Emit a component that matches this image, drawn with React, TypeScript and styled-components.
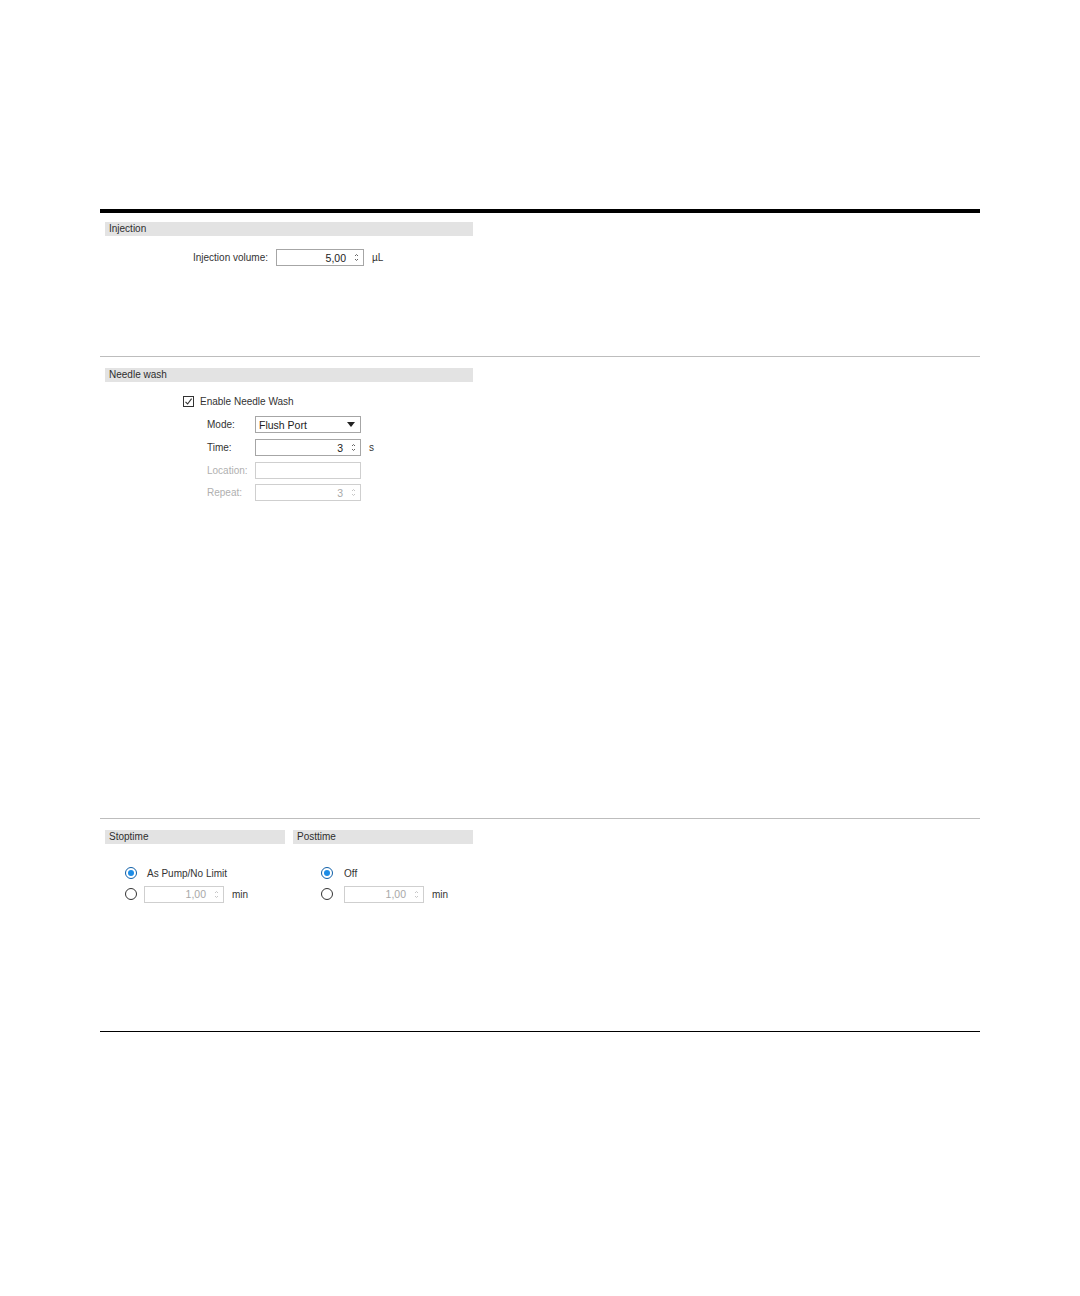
import styled, { createGlobalStyle } from "styled-components";

const GlobalStyle = createGlobalStyle`
  html, body {
    margin: 0;
    padding: 0;
    background: #ffffff;
  }
  body {
    font-family: "Liberation Sans", Arial, sans-serif;
    font-size: 10px;
    color: #333333;
  }
`;

const Page = styled.div`
  width: 980px;
  padding: 209px 0 0 100px;
  min-height: 1296px;
  box-sizing: border-box;
`;

const ThickRule = styled.div`
  height: 4px;
  background: #000000;
`;

const Section = styled.div<{ $height: number; $rule: string; $pad: number }>`
  height: ${({ $height }) => $height}px;
  border-bottom: 1px solid ${({ $rule }) => $rule};
  padding-top: ${({ $pad }) => $pad}px;
  display: flex;
  flex-direction: column;
`;

const HeaderRow = styled.div`
  display: flex;
  gap: 8px;
  padding-left: 5px;
`;

const Header = styled.div<{ $width: number }>`
  width: ${({ $width }) => $width}px;
  height: 14px;
  line-height: 14px;
  background: #e3e3e3;
  padding-left: 4px;
  box-sizing: border-box;
  font-size: 10px;
  color: #2e2e2e;
`;

const Label = styled.span<{ $width: number; $align?: string; $disabled?: boolean }>`
  width: ${({ $width }) => $width}px;
  text-align: ${({ $align }) => $align || "left"};
  color: ${({ $disabled }) => ($disabled ? "#b0b0b0" : "#333333")};
  flex-shrink: 0;
`;

const FieldRow = styled.div<{ $top: number; $left: number; $gap?: number }>`
  display: flex;
  align-items: center;
  height: 17px;
  margin-top: ${({ $top }) => $top}px;
  padding-left: ${({ $left }) => $left}px;
  gap: ${({ $gap }) => $gap ?? 8}px;
`;

const Box = styled.div<{ $width: number; $disabled?: boolean }>`
  width: ${({ $width }) => $width}px;
  height: 17px;
  box-sizing: border-box;
  border: 1px solid ${({ $disabled }) => ($disabled ? "#cfcfcf" : "#a6a6a6")};
  background: #ffffff;
  display: flex;
  align-items: center;
  color: ${({ $disabled }) => ($disabled ? "#a8a8a8" : "#222222")};
  font-size: 10.5px;
  flex-shrink: 0;
`;

const BoxValue = styled.span<{ $align: string }>`
  flex: 1;
  text-align: ${({ $align }) => $align};
  padding: 0 3px;
`;

const SpinArea = styled.span<{ $width?: number }>`
  width: ${({ $width }) => $width ?? 14}px;
  display: flex;
  justify-content: center;
`;

const Unit = styled.span<{ $gap?: number }>`
  color: #333333;
  margin-left: ${({ $gap }) => $gap ?? 0}px;
`;

const CheckRow = styled.div`
  display: flex;
  align-items: center;
  gap: 6px;
  margin-top: 12px;
  padding-left: 83px;
  height: 14px;
`;

const CheckBox = styled.span`
  width: 11px;
  height: 11px;
  box-sizing: border-box;
  border: 1px solid #333333;
  display: flex;
  align-items: center;
  justify-content: center;
`;

const Columns = styled.div`
  display: flex;
  gap: 8px;
  padding-left: 5px;
`;

const Column = styled.div<{ $width: number; $indent: number }>`
  width: ${({ $width }) => $width}px;
  padding-left: ${({ $indent }) => $indent}px;
  box-sizing: border-box;
  display: flex;
  flex-direction: column;
  gap: 3px;
  margin-top: 20px;
`;

const RadioRow = styled.div<{ $gap: number }>`
  display: flex;
  align-items: center;
  height: 18px;
  gap: ${({ $gap }) => $gap}px;
`;

const Radio = styled.span<{ $checked?: boolean }>`
  width: 12px;
  height: 12px;
  box-sizing: border-box;
  border-radius: 50%;
  border: 1px solid ${({ $checked }) => ($checked ? "#0f5fa8" : "#333333")};
  display: flex;
  align-items: center;
  justify-content: center;
  flex-shrink: 0;

  &::after {
    content: "";
    width: 6px;
    height: 6px;
    border-radius: 50%;
    background: ${({ $checked }) => ($checked ? "#1c8ce6" : "transparent")};
  }
`;

function Spinner({ disabled }: { disabled?: boolean }) {
  const c = disabled ? "#c0c0c0" : "#555555";
  return (
    <SpinArea>
      <svg width="5" height="9" viewBox="0 0 5 9">
        <path d="M1 3 L2.5 1.5 L4 3" fill="none" stroke={c} strokeWidth="0.9" />
        <path d="M1 6 L2.5 7.5 L4 6" fill="none" stroke={c} strokeWidth="0.9" />
      </svg>
    </SpinArea>
  );
}

function NumberBox({
  value,
  width,
  disabled,
}: {
  value: string;
  width: number;
  disabled?: boolean;
}) {
  return (
    <Box $width={width} $disabled={disabled}>
      <BoxValue $align="right">{value}</BoxValue>
      <Spinner disabled={disabled} />
    </Box>
  );
}

export default function App() {
  return (
    <>
      <GlobalStyle />
      <Page>
        <ThickRule />

        <Section $height={134} $pad={9} $rule="#bdbdbd">
          <HeaderRow>
            <Header $width={368}>Injection</Header>
          </HeaderRow>
          <FieldRow $top={13} $left={0}>
            <Label $width={168} $align="right">
              Injection volume:
            </Label>
            <NumberBox value="5,00" width={88} />
            <Unit>µL</Unit>
          </FieldRow>
        </Section>

        <Section $height={450} $pad={11} $rule="#bdbdbd">
          <HeaderRow>
            <Header $width={368}>Needle wash</Header>
          </HeaderRow>
          <CheckRow>
            <CheckBox>
              <svg width="9" height="9" viewBox="0 0 9 9">
                <path d="M1.5 4.8 L3.6 7 L7.6 1.6" fill="none" stroke="#333" strokeWidth="1.1" />
              </svg>
            </CheckBox>
            <span>Enable Needle Wash</span>
          </CheckRow>
          <FieldRow $top={8} $left={107} $gap={0}>
            <Label $width={48}>Mode:</Label>
            <Box $width={106}>
              <BoxValue $align="left">Flush Port</BoxValue>
              <SpinArea $width={18}>
                <svg width="8" height="5" viewBox="0 0 8 5">
                  <path d="M0 0 H8 L4 5 Z" fill="#222" />
                </svg>
              </SpinArea>
            </Box>
          </FieldRow>
          <FieldRow $top={6} $left={107} $gap={0}>
            <Label $width={48}>Time:</Label>
            <NumberBox value="3" width={106} />
            <Unit $gap={8}>s</Unit>
          </FieldRow>
          <FieldRow $top={6} $left={107} $gap={0}>
            <Label $width={48} $disabled>
              Location:
            </Label>
            <Box $width={106} $disabled />
          </FieldRow>
          <FieldRow $top={5} $left={107} $gap={0}>
            <Label $width={48} $disabled>
              Repeat:
            </Label>
            <NumberBox value="3" width={106} disabled />
          </FieldRow>
        </Section>

        <Section $height={201} $pad={11} $rule="#000000">
          <HeaderRow>
            <Header $width={180}>Stoptime</Header>
            <Header $width={180}>Posttime</Header>
          </HeaderRow>
          <Columns>
            <Column $width={180} $indent={20}>
              <RadioRow $gap={10}>
                <Radio $checked />
                <span>As Pump/No Limit</span>
              </RadioRow>
              <RadioRow $gap={7}>
                <Radio />
                <NumberBox value="1,00" width={80} disabled />
                <Unit $gap={1}>min</Unit>
              </RadioRow>
            </Column>
            <Column $width={180} $indent={28}>
              <RadioRow $gap={11}>
                <Radio $checked />
                <span>Off</span>
              </RadioRow>
              <RadioRow $gap={11}>
                <Radio />
                <NumberBox value="1,00" width={80} disabled />
                <Unit $gap={-3}>min</Unit>
              </RadioRow>
            </Column>
          </Columns>
        </Section>
      </Page>
    </>
  );
}
